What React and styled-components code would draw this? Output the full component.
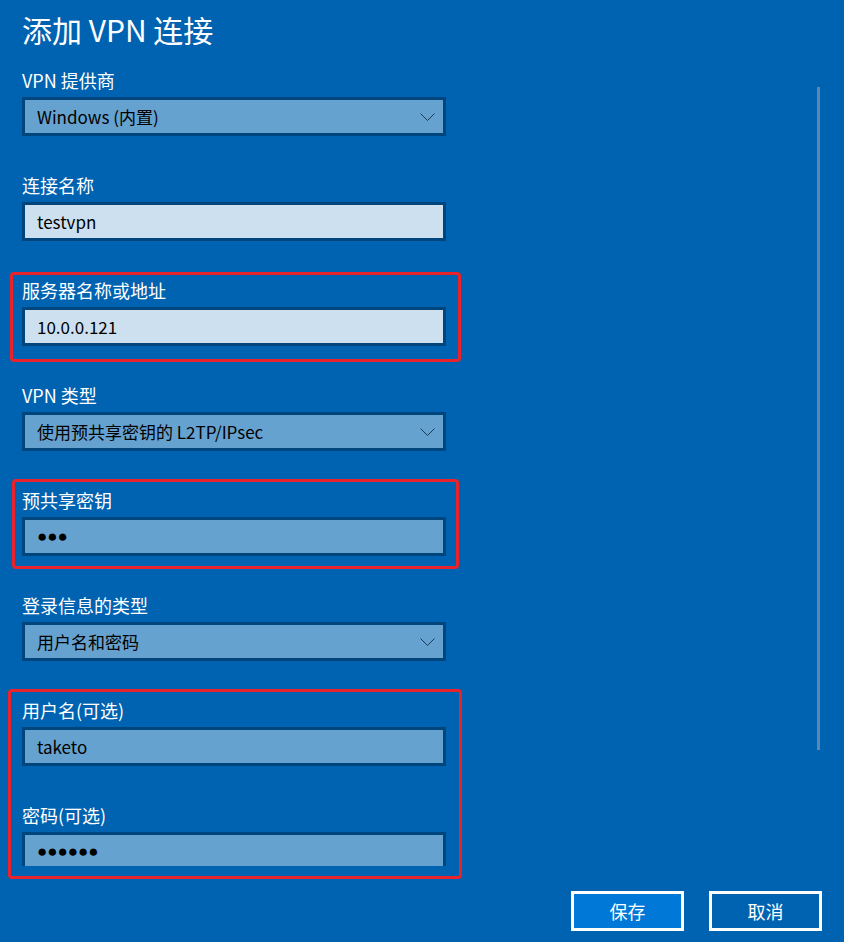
import React from "react";
import styled, { createGlobalStyle, css } from "styled-components";

const GlobalStyle = createGlobalStyle`
  html, body {
    margin: 0;
    padding: 0;
    background: #0063b1;
  }
  body {
    font-family: "Noto Sans CJK SC", "Segoe UI", sans-serif;
  }
`;

const Window = styled.div`
  width: 844px;
  height: 942px;
  background: #0063b1;
  color: #fff;
  display: flex;
  flex-direction: column;
  overflow: hidden;
`;

const Body = styled.div`
  height: 866px;
  flex: none;
  display: flex;
  justify-content: space-between;
`;

const Form = styled.div`
  width: 424px;
  padding: 9px 0 0 22px;
  display: flex;
  flex-direction: column;
`;

const Title = styled.h1`
  margin: 0 0 19px;
  font-size: 30px;
  font-weight: 400;
  line-height: 40px;
  white-space: nowrap;
`;

const Fields = styled.div`
  display: flex;
  flex-direction: column;
  gap: 37px;
`;

const Marked = styled.div`
  position: relative;
  display: flex;
  flex-direction: column;
  gap: 37px;

  &::after {
    content: "";
    position: absolute;
    inset: ${(p) => p.$inset};
    border: 3px solid #e8232b;
    border-radius: 4px;
    pointer-events: none;
  }
`;

const Field = styled.div`
  display: flex;
  flex-direction: column;
  gap: 5px;
`;

const Label = styled.div`
  font-size: 18px;
  line-height: 24px;
  white-space: nowrap;
`;

const Box = styled.div`
  box-sizing: border-box;
  height: 39px;
  border: 3px solid #00457c;
  background: ${(p) => (p.$light ? "#cce0ef" : "#66a2d0")};
  padding: 0 8px 0 12px;
  display: flex;
  align-items: center;
  justify-content: space-between;
  color: #000;
  font-size: 17px;
  ${(p) =>
    p.$cut &&
    css`
      height: 34px;
      border-bottom: 0;
      padding-top: 3px;
    `}
`;

const Mask = styled.span`
  font-family: "Liberation Sans", sans-serif;
  font-size: 17px;
  letter-spacing: 0;
  color: #000;
`;

const Chevron = () => (
  <svg width="15" height="8" viewBox="0 0 15 8" fill="none">
    <polyline points="0.5,0.5 7.5,7.5 14.5,0.5" stroke="#1c3a58" strokeWidth="1" />
  </svg>
);

const Rail = styled.div`
  width: 3px;
  height: 663px;
  margin: 87px 24px 0 0;
  background: #5c87ae;
  align-self: flex-start;
`;

const Footer = styled.div`
  display: flex;
  justify-content: flex-end;
  gap: 25px;
  padding: 25px 22px 0 0;
`;

const Button = styled.button`
  box-sizing: border-box;
  width: 113px;
  height: 40px;
  border: 3px solid #fff;
  background: ${(p) => (p.$primary ? "#0078d7" : "transparent")};
  color: #fff;
  font-family: inherit;
  font-size: 18px;
  line-height: 1;
  padding: 0;
`;

const Select = ({ children }) => (
  <Box>
    <span>{children}</span>
    <Chevron />
  </Box>
);

export default function App() {
  return (
    <Window>
      <GlobalStyle />
      <Body>
        <Form>
          <Title>添加 VPN 连接</Title>
          <Fields>
            <Field>
              <Label>VPN 提供商</Label>
              <Select>Windows (内置)</Select>
            </Field>
            <Field>
              <Label>连接名称</Label>
              <Box $light>testvpn</Box>
            </Field>
            <Marked $inset="-6px -15px -16px -12px">
              <Field>
                <Label>服务器名称或地址</Label>
                <Box $light>10.0.0.121</Box>
              </Field>
            </Marked>
            <Field>
              <Label>VPN 类型</Label>
              <Select>使用预共享密钥的 L2TP/IPsec</Select>
            </Field>
            <Marked $inset="-9px -13px -13px -10px">
              <Field>
                <Label>预共享密钥</Label>
                <Box>
                  <Mask>●●●</Mask>
                </Box>
              </Field>
            </Marked>
            <Field>
              <Label>登录信息的类型</Label>
              <Select>用户名和密码</Select>
            </Field>
            <Marked $inset="-9px -16px -13px -14px">
              <Field>
                <Label>用户名(可选)</Label>
                <Box>taketo</Box>
              </Field>
              <Field>
                <Label>密码(可选)</Label>
                <Box $cut>
                  <Mask>●●●●●●</Mask>
                </Box>
              </Field>
            </Marked>
          </Fields>
        </Form>
        <Rail />
      </Body>
      <Footer>
        <Button $primary>保存</Button>
        <Button>取消</Button>
      </Footer>
    </Window>
  );
}
